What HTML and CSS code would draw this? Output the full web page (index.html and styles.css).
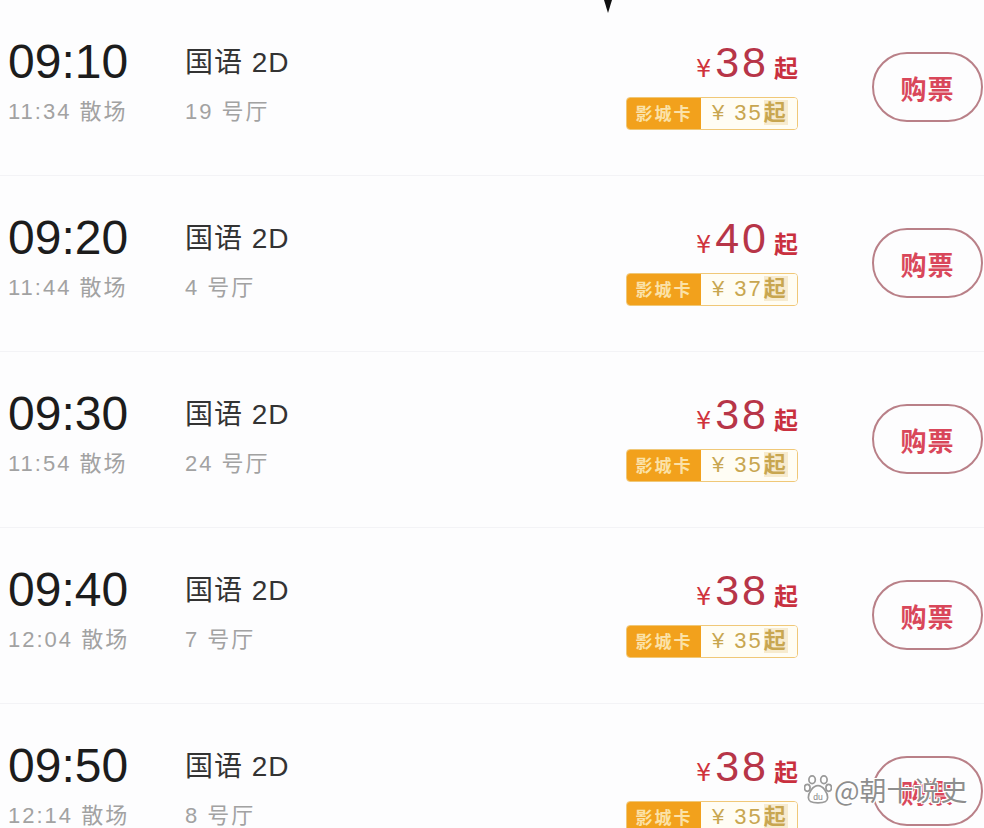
FILE: index.html
```html
<!DOCTYPE html>
<html lang="zh">
<head>
<meta charset="utf-8">
<title>场次</title>
<link rel="stylesheet" href="styles.css">
</head>
<body>
<div class="page">
  <svg class="mark" width="12" height="14" viewBox="0 0 12 14"><path d="M3 0 L11 0 L7 13 Z" fill="#111"/></svg>

  <div class="row">
    <div class="time"><div class="start">09:10</div><div class="sub">11:34 散场</div></div>
    <div class="info"><div class="lang">国语 2D</div><div class="sub">19 号厅</div></div>
    <div class="price"><div class="main"><span class="yen">¥</span><span class="num">38</span><span class="qi">起</span></div>
      <div class="card"><span class="card-l">影城卡</span><span class="card-r">¥ 35<b>起</b></span></div></div>
    <div class="buy">购票</div>
  </div>

  <div class="row">
    <div class="time"><div class="start">09:20</div><div class="sub">11:44 散场</div></div>
    <div class="info"><div class="lang">国语 2D</div><div class="sub">4 号厅</div></div>
    <div class="price"><div class="main"><span class="yen">¥</span><span class="num">40</span><span class="qi">起</span></div>
      <div class="card"><span class="card-l">影城卡</span><span class="card-r">¥ 37<b>起</b></span></div></div>
    <div class="buy">购票</div>
  </div>

  <div class="row">
    <div class="time"><div class="start">09:30</div><div class="sub">11:54 散场</div></div>
    <div class="info"><div class="lang">国语 2D</div><div class="sub">24 号厅</div></div>
    <div class="price"><div class="main"><span class="yen">¥</span><span class="num">38</span><span class="qi">起</span></div>
      <div class="card"><span class="card-l">影城卡</span><span class="card-r">¥ 35<b>起</b></span></div></div>
    <div class="buy">购票</div>
  </div>

  <div class="row">
    <div class="time"><div class="start">09:40</div><div class="sub">12:04 散场</div></div>
    <div class="info"><div class="lang">国语 2D</div><div class="sub">7 号厅</div></div>
    <div class="price"><div class="main"><span class="yen">¥</span><span class="num">38</span><span class="qi">起</span></div>
      <div class="card"><span class="card-l">影城卡</span><span class="card-r">¥ 35<b>起</b></span></div></div>
    <div class="buy">购票</div>
  </div>

  <div class="row">
    <div class="time"><div class="start">09:50</div><div class="sub">12:14 散场</div></div>
    <div class="info"><div class="lang">国语 2D</div><div class="sub">8 号厅</div></div>
    <div class="price"><div class="main"><span class="yen">¥</span><span class="num">38</span><span class="qi">起</span></div>
      <div class="card"><span class="card-l">影城卡</span><span class="card-r">¥ 35<b>起</b></span></div></div>
    <div class="buy">购票</div>
  </div>

  <div class="watermark">
    <svg class="paw" width="28" height="30" viewBox="0 0 26 28">
      <g fill="#fff" stroke="#9a9a9a" stroke-width="1.6">
        <ellipse cx="7.5" cy="4.5" rx="3" ry="3.6"/>
        <ellipse cx="18.5" cy="4.5" rx="3" ry="3.6"/>
        <ellipse cx="3" cy="12" rx="2.6" ry="3.2"/>
        <ellipse cx="23" cy="12" rx="2.6" ry="3.2"/>
        <path d="M13 10 C8 10 4 17 4 21 C4 25 7 26 13 26 C19 26 22 25 22 21 C22 17 18 10 13 10 Z"/>
      </g>
      <text x="13" y="23" text-anchor="middle" font-family="Liberation Sans, sans-serif" font-size="8" fill="#888">du</text>
    </svg>
    <span class="wm-text">@朝十说史</span>
  </div>
</div>
</body>
</html>
```
FILE: styles.css
```css
html, body {
  margin: 0;
  padding: 0;
  background: #fdfdfe;
}
body {
  width: 984px;
  height: 828px;
  overflow: hidden;
  font-family: "Liberation Sans", "Noto Sans CJK SC", sans-serif;
}
.page {
  position: relative;
  width: 984px;
  height: 828px;
  overflow: hidden;
}
.mark {
  position: absolute;
  left: 601px;
  top: 0;
}
.row {
  display: flex;
  align-items: flex-start;
  height: 176px;
  padding: 38px 1px 0 8px;
  border-bottom: 1px solid #f3f3f6;
  box-sizing: border-box;
}
.time {
  width: 177px;
  flex: none;
}
.start {
  font-size: 48px;
  line-height: 48px;
  color: #1c1c1c;
}
.sub {
  font-size: 22px;
  line-height: 22px;
  color: #a2a2a2;
  letter-spacing: 2px;
  margin-top: 15px;
  white-space: nowrap;
}
.info {
  flex: 1;
  margin-top: 11px;
}
.lang {
  font-size: 28px;
  line-height: 28px;
  color: #333;
  letter-spacing: 1px;
}
.info .sub {
  margin-top: 24px;
}
.price {
  flex: none;
  display: flex;
  flex-direction: column;
  align-items: flex-end;
  margin-top: 6px;
}
.main {
  display: flex;
  align-items: baseline;
  height: 36px;
  line-height: 36px;
  color: #c9303f;
}
.yen {
  font-size: 24px;
  font-family: "DejaVu Sans", sans-serif;
  margin-right: 4px;
  color: #d0323c;
}
.num {
  font-family: "Liberation Sans", sans-serif;
  font-size: 43px;
  letter-spacing: 3px;
  color: #b73548;
}
.qi {
  font-size: 24px;
  font-weight: bold;
  margin-left: 5px;
  font-family: "Noto Sans CJK SC", sans-serif;
}
.card {
  display: flex;
  height: 33px;
  margin-top: 17px;
  border-radius: 4px;
  overflow: hidden;
  border: 1.5px solid #f0c878;
  box-sizing: border-box;
}
.card-l {
  width: 74px;
  background: #f2a11c;
  color: #fbe2a8;
  font-size: 17px;
  font-weight: bold;
  line-height: 30px;
  text-align: center;
  letter-spacing: 2px;
  font-family: "Noto Sans CJK SC", sans-serif;
}
.card-r {
  width: 96px;
  background: #fffdf4;
  color: #c8a650;
  font-size: 22px;
  line-height: 30px;
  padding-left: 11px;
  box-sizing: border-box;
  letter-spacing: 2px;
  white-space: nowrap;
}
.card-r b {
  font-weight: bold;
  font-size: 22px;
  background: #f7ebcf;
  margin-left: 1px;
}
.buy {
  flex: none;
  width: 111px;
  height: 70px;
  margin-left: 74px;
  margin-top: 14px;
  border: 2px solid #b98088;
  border-radius: 35px;
  box-sizing: border-box;
  display: flex;
  align-items: center;
  justify-content: center;
  font-size: 26px;
  font-weight: bold;
  color: #d9475a;
  letter-spacing: 1px;
  font-family: "Noto Sans CJK SC", sans-serif;
}
.watermark {
  position: absolute;
  left: 804px;
  top: 775px;
  display: flex;
  align-items: center;
  gap: 2px;
}
.wm-text {
  font-size: 27px;
  line-height: 30px;
  color: #8e8e8e;
  font-family: "Noto Sans CJK SC", sans-serif;
  text-shadow: 0 0 2px #fff, 1px 1px 0 #fff, -1px -1px 0 #fff, 1px -1px 0 #fff, -1px 1px 0 #fff;
}
```
